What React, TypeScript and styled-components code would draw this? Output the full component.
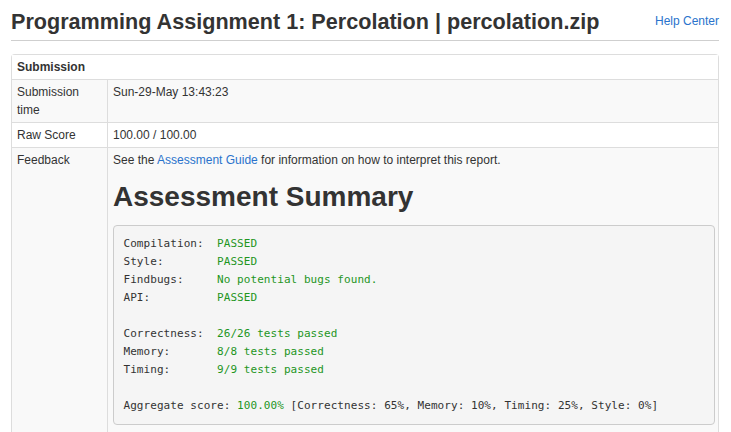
import styled, { createGlobalStyle } from 'styled-components'

const GlobalStyle = createGlobalStyle`
  html, body {
    margin: 0;
    padding: 0;
    background: #fff;
  }
  body {
    font-family: "Liberation Sans", Arial, sans-serif;
    font-size: 12px;
    color: #333;
  }
`

const Page = styled.div`
  padding: 10px 12px 0 11px;
`

const TitleBar = styled.div`
  display: flex;
  align-items: center;
  justify-content: space-between;
  padding-bottom: 6px;
  border-bottom: 1px solid #cfcfcf;
`

const Title = styled.h2`
  margin: 0;
  font-size: 21.6px;
  line-height: 24px;
  font-weight: bold;
  color: #333;
`

const Link = styled.a`
  color: #2a73cc;
  text-decoration: none;
`

const HelpLink = styled(Link)`
  font-size: 12px;
  margin-top: -2px;
`

const Table = styled.table`
  margin-top: 13px;
  width: 100%;
  border-collapse: separate;
  border-spacing: 0;
  border: 1px solid #ddd;
  border-radius: 4px 4px 0 0;
  border-bottom: none;
`

const HeadCell = styled.th`
  text-align: left;
  font-weight: bold;
  padding: 3px 5px;
  line-height: 18px;
  background: #fff;
`

const Row = styled.tr<{ $striped?: boolean }>`
  background: ${(p) => (p.$striped ? '#f9f9f9' : '#fff')};
`

const LabelCell = styled.td`
  width: 85px;
  padding: 3px 5px;
  line-height: 18px;
  vertical-align: top;
  border-top: 1px solid #ddd;
  border-right: 1px solid #ddd;
`

const ValueCell = styled.td`
  padding: 3px 3px 3px 5px;
  line-height: 18px;
  vertical-align: top;
  border-top: 1px solid #ddd;
`

const Intro = styled.p`
  margin: 0 0 12px;
`

const Heading = styled.h1`
  margin: 0 0 13px;
  font-size: 28px;
  line-height: 31px;
  font-weight: bold;
  color: #333;
`

const Report = styled.pre`
  margin: 0 0 10px;
  padding: 9px 9.5px;
  background: #f5f5f5;
  border: 1px solid #ccc;
  border-radius: 4px;
  font-family: "DejaVu Sans Mono", "Liberation Mono", monospace;
  font-size: 11px;
  letter-spacing: 0.06px;
  line-height: 18px;
  color: #333;
  white-space: pre;
`

const Pass = styled.span`
  color: #1e961e;
`

export default function App() {
  return (
    <>
      <GlobalStyle />
      <Page>
        <TitleBar>
          <Title>Programming Assignment 1: Percolation | percolation.zip</Title>
          <HelpLink href="#">Help Center</HelpLink>
        </TitleBar>
        <Table>
          <thead>
            <tr>
              <HeadCell colSpan={2}>Submission</HeadCell>
            </tr>
          </thead>
          <tbody>
            <Row $striped>
              <LabelCell>Submission time</LabelCell>
              <ValueCell>Sun-29-May 13:43:23</ValueCell>
            </Row>
            <Row>
              <LabelCell>Raw Score</LabelCell>
              <ValueCell>100.00 / 100.00</ValueCell>
            </Row>
            <Row $striped>
              <LabelCell>Feedback</LabelCell>
              <ValueCell>
                <Intro>
                  See the <Link href="#">Assessment Guide</Link> for information on how to interpret this report.
                </Intro>
                <Heading>Assessment Summary</Heading>
                <Report>
                  {'Compilation:  '}<Pass>PASSED</Pass>{'\n'}
                  {'Style:        '}<Pass>PASSED</Pass>{'\n'}
                  {'Findbugs:     '}<Pass>No potential bugs found.</Pass>{'\n'}
                  {'API:          '}<Pass>PASSED</Pass>{'\n'}
                  {'\n'}
                  {'Correctness:  '}<Pass>26/26 tests passed</Pass>{'\n'}
                  {'Memory:       '}<Pass>8/8 tests passed</Pass>{'\n'}
                  {'Timing:       '}<Pass>9/9 tests passed</Pass>{'\n'}
                  {'\n'}
                  {'Aggregate score: '}<Pass>100.00%</Pass>
                  {' [Correctness: 65%, Memory: 10%, Timing: 25%, Style: 0%]'}
                </Report>
              </ValueCell>
            </Row>
          </tbody>
        </Table>
      </Page>
    </>
  )
}
